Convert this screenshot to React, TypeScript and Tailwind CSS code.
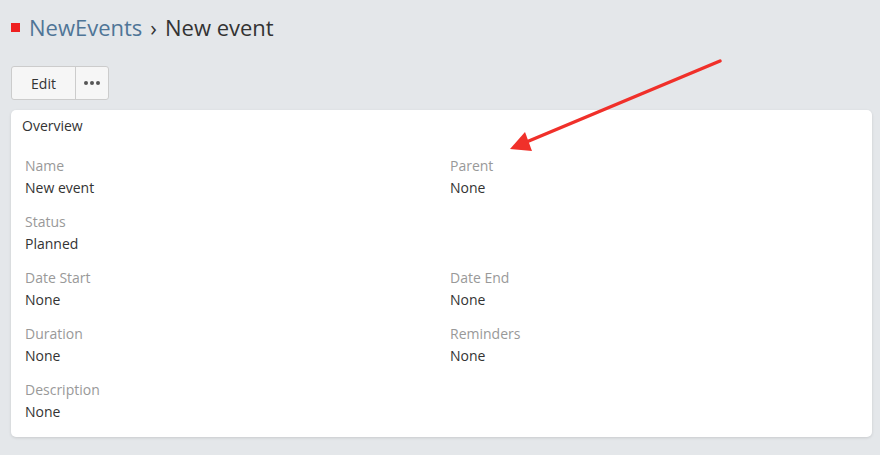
const fields: { label: string; value: string }[][] = [
  [{ label: "Name", value: "New event" }, { label: "Parent", value: "None" }],
  [{ label: "Status", value: "Planned" }],
  [{ label: "Date Start", value: "None" }, { label: "Date End", value: "None" }],
  [{ label: "Duration", value: "None" }, { label: "Reminders", value: "None" }],
  [{ label: "Description", value: "None" }],
];

const Field = ({ label, value }: { label: string; value: string }) => (
  <div className="flex flex-col">
    <span className="text-[14px] leading-[20px] text-[#999]">{label}</span>
    <span className="text-[14px] leading-[24px] text-[#333]">{value}</span>
  </div>
);

const App = () => {
  return (
    <div className="relative w-[880px] h-[455px] bg-[#e4e7ea] px-[11px] pt-[14px] font-['Open_Sans',sans-serif] overflow-hidden">
      <div className="flex items-center h-[26px]">
        <span className="w-[9px] h-[9px] bg-[#ee2020] mt-[1px] mr-[9px]"></span>
        <span className="text-[22px] text-[#4f7597]">NewEvents</span>
        <span className="text-[22px] text-[#333] mx-[8px]">›</span>
        <span className="text-[22px] text-[#333]">New event</span>
      </div>

      <div className="flex mt-[26px] h-[34px] w-[98px] rounded-[3px] border border-[#ccc] bg-[#f6f6f6] overflow-hidden">
        <button className="w-[64px] text-[14px] text-[#333] border-r border-[#ccc]">Edit</button>
        <button className="flex-1 flex items-center justify-center gap-[2px]">
          <span className="w-[4px] h-[4px] rounded-full bg-[#555]"></span>
          <span className="w-[4px] h-[4px] rounded-full bg-[#555]"></span>
          <span className="w-[4px] h-[4px] rounded-full bg-[#555]"></span>
        </button>
      </div>

      <div className="mt-[10px] w-[861px] bg-white rounded-[5px] shadow-[0_1px_3px_rgba(0,0,0,0.12)] pt-[6px] pb-[13px]">
        <div className="px-[11px] text-[14px] leading-[20px] text-[#333]">Overview</div>
        <div className="flex flex-col gap-[12px] mt-[20px] px-[14px]">
          {fields.map((row, i) => (
            <div key={i} className="grid grid-cols-[425px_1fr]">
              {row.map((f) => (
                <Field key={f.label} label={f.label} value={f.value} />
              ))}
            </div>
          ))}
        </div>
      </div>

      <svg className="absolute left-0 top-0 pointer-events-none" width="880" height="455">
        <line x1="720" y1="61" x2="524" y2="143" stroke="#f0302a" strokeWidth="3.5" strokeLinecap="round" />
        <polygon points="510,149 525,132 532,151" fill="#f0302a" />
      </svg>
    </div>
  );
};

export default App;
